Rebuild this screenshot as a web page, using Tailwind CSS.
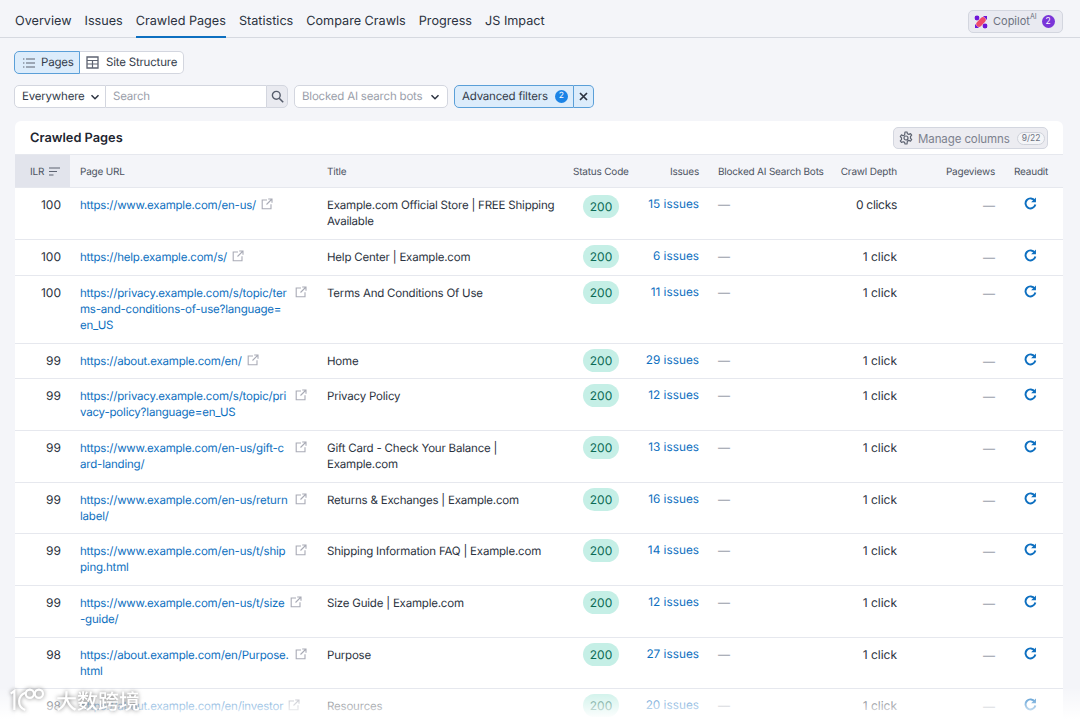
<!DOCTYPE html>
<html>
 <head>
  <title>Crawled Pages</title>
  <script src="https://cdn.jsdelivr.net/npm/@tailwindcss/browser@4"></script>
 </head>
 <body class="bg-[#f4f5f9] text-[#333b4a] font-['Inter',sans-serif] [text-rendering:geometricPrecision] whitespace-nowrap w-[1080px] h-[719px] overflow-hidden relative">
  <svg class="hidden">
   <symbol id="ext" viewBox="0 0 12 12"><path d="M6 2H1.200v8.800H10V6.200M7.200 1h3.800v3.800M11 1 5.500 6.500" fill="none" stroke="#a9abb6" stroke-width="1.100"/></symbol>
   <symbol id="redo" viewBox="0 0 12 12"><path d="M9.900 3.400A4.600 4.600 0 1 0 10.500 7" fill="none" stroke="#0d6fc0" stroke-width="1.800"/><path d="M11 .4v4.400H6.600z" fill="#0d6fc0"/></symbol>
  </svg>

  <!-- tabs -->
  <nav class="h-[38px] border-b border-[#d6d9e0] flex items-start pl-[15px] pr-[17px] gap-[13px] text-[12.650px] text-[#2b3240]">
   <a class="h-[38px] leading-[44px]">Overview</a>
   <a class="h-[38px] leading-[44px]">Issues</a>
   <a class="h-[38px] leading-[44px] border-b-2 border-[#0d6fc0]">Crawled Pages</a>
   <a class="h-[38px] leading-[44px]">Statistics</a>
   <a class="h-[38px] leading-[44px]">Compare Crawls</a>
   <a class="h-[38px] leading-[44px]">Progress</a>
   <a class="h-[38px] leading-[44px]">JS Impact</a>
   <button class="ml-auto mt-[10px] h-[23px] w-[95px] rounded-[5px] border border-[#d3d6df] bg-[#e9eaf1] flex items-center pl-[5px] text-[11px] text-[#6c7280]">
    <svg class="w-[14px] h-[14px] mr-[5px] shrink-0" viewBox="0 0 14 14"><path d="M1 5V1h4z M9 1h4v4z M1 9v4h4z M9 13h4V9z" fill="#6f16d8"/><circle cx="3" cy="3" r="2.400" fill="#6f16d8"/><circle cx="11" cy="11" r="2.400" fill="#6f16d8"/><rect x="1.500" y="4.200" width="11" height="5.600" rx="2.800" transform="rotate(-45 7 7)" fill="#ef4a6b"/></svg>
    Copilot<sup class="text-[7px] -mt-[2px]">AI</sup>
    <span class="ml-[5px] w-[13px] h-[13px] rounded-full bg-[#7a35d8] text-white text-[8.500px] leading-[13px]">2</span>
   </button>
  </nav>

  <!-- view switch -->
  <div class="flex ml-[14px] mt-[13px] h-[23px] text-[11.500px] tracking-[-0.2px]">
   <div class="w-[66px] flex items-center gap-[5px] pl-[7px] rounded-l-[5px] border border-[#5a9fd8] bg-[#dcecfb]">
    <svg class="w-[14px] h-[14px]" viewBox="0 0 14 14"><path d="M4 3h9M4 7h9M4 11h9" stroke="#5d6371" stroke-width="1.100"/><path d="M1 3h1.400M1 7h1.400M1 11h1.400" stroke="#5d6371" stroke-width="1.200"/></svg>
    Pages
   </div>
   <div class="w-[104px] flex items-center gap-[7px] pl-[6px] rounded-r-[5px] border border-l-0 border-[#d3d6df] bg-white">
    <svg class="w-[13px] h-[13px]" viewBox="0 0 13 13"><path d="M1 1h11v11H1z" fill="none" stroke="#5d6371" stroke-width="1.300"/><path d="M1 4.500h11M1 8h11M6.500 4.500V12" stroke="#5d6371" stroke-width="1.200"/></svg>
    Site Structure
   </div>
  </div>

  <!-- filters -->
  <div class="flex ml-[14px] mt-[11px] h-[23px] text-[11.500px] tracking-[-0.2px]">
   <div class="w-[92px] flex items-center justify-between pl-[7px] pr-[5px] rounded-l-[5px] border border-[#d3d6df] bg-white">
    Everywhere
    <svg class="w-[10px] h-[10px]" viewBox="0 0 10 10"><path d="m1.500 3.200 3.500 3.500 3.500-3.500" fill="none" stroke="#2b3240" stroke-width="1.500"/></svg>
   </div>
   <div class="w-[160px] flex items-center pl-[7px] border-y border-[#d3d6df] bg-white text-[#9a9eaa]">Search</div>
   <div class="w-[22px] flex items-center justify-center rounded-r-[5px] border border-[#d3d6df] bg-[#e9eaf0]">
    <svg class="w-[13px] h-[13px]" viewBox="0 0 13 13"><circle cx="5.300" cy="5.300" r="3.900" fill="none" stroke="#555c6b" stroke-width="1.400"/><path d="m8.200 8.200 4 4" stroke="#555c6b" stroke-width="1.600"/></svg>
   </div>
   <div class="ml-[6px] w-[154px] flex items-center justify-between pl-[7px] pr-[7px] rounded-[5px] border border-[#d3d6df] bg-white text-[#9a9eaa]">
    Blocked AI search bots
    <svg class="w-[10px] h-[10px]" viewBox="0 0 10 10"><path d="m1.500 3.200 3.500 3.500 3.500-3.500" fill="none" stroke="#2b3240" stroke-width="1.500"/></svg>
   </div>
   <div class="ml-[6px] w-[120px] flex items-center pl-[7px] rounded-l-[5px] border border-[#5a9fd8] bg-[#dcecfb]">
    Advanced filters
    <span class="ml-[7px] w-[13px] h-[13px] rounded-full bg-[#1a83e6] text-white text-[8.500px] leading-[13px] text-center">2</span>
   </div>
   <div class="w-[20px] flex items-center justify-center rounded-r-[5px] border border-l-0 border-[#5a9fd8] bg-[#dcecfb]">
    <svg class="w-[9px] h-[9px]" viewBox="0 0 9 9"><path d="m1 1 7 7M8 1 1 8" stroke="#2b3240" stroke-width="1.700"/></svg>
   </div>
  </div>

  <!-- card -->
  <section class="ml-[15px] mt-[13px] w-[1048px] bg-white rounded-t-[6px]">
   <header class="h-[34px] flex items-center justify-between pl-[15px] pr-[15px] border-b border-[#e6e8ee]">
    <h2 class="text-[12.800px] font-semibold text-[#1e2530] pt-[3px]">Crawled Pages</h2>
    <button class="h-[22px] w-[155px] mt-[1px] rounded-[5px] border border-[#d3d6df] bg-[#ececf1] flex items-center pl-[5px] text-[11.500px] leading-[22px] tracking-[-0.1px] text-[#7c818e]">
     <svg class="w-[14px] h-[14px] mr-[5px] shrink-0" viewBox="0 0 14 14"><circle cx="7" cy="7" r="2" fill="none" stroke="#5d6371" stroke-width="1.200"/><path d="M6 1h2l.4 1.700 1.500.7 1.600-.8 1.200 1.600-1.200 1.300v1.800l1.200 1.200-1.200 1.700-1.600-.8-1.500.7L8 13H6l-.4-1.600-1.500-.7-1.600.8-1.200-1.700 1.200-1.200V6.800L1.300 5.500 2.500 3.900l1.600.8 1.500-.7z" fill="none" stroke="#5d6371" stroke-width="1.200" stroke-linejoin="round"/></svg>
     <span class="pt-[1px]">Manage columns</span>
     <span class="ml-[7px] px-[4px] h-[13px] rounded-full border border-[#cfd2da] bg-[#f4f5f8] text-[8.500px] leading-[11px] tracking-normal text-[#6c7280]">9/22</span>
    </button>
   </header>

   <table class="w-[1048px] table-fixed border-collapse text-[12px] leading-[16px] text-[#2b3240]">
    <colgroup>
     <col class="w-[55px]"><col class="w-[247px]"><col class="w-[247px]"><col class="w-[70px]"><col class="w-[74px]"><col class="w-[124px]"><col class="w-[75px]"><col class="w-[97px]"><col class="w-[59px]">
    </colgroup>
    <thead>
     <tr class="h-[32px] bg-[#f4f5f9] text-[10px] tracking-[-0.2px] text-[#4d5462] border-b border-[#e6e8ee] [&>th]:pt-[2px]">
      <th class="font-normal bg-[#e2e4ec] pl-[15px] text-left"><span class="flex items-center gap-[5px]">ILR <svg class="w-[11px] h-[9px]" viewBox="0 0 11 9"><path d="M0 1h11M0 4.500h8M0 8h4.500" stroke="#5d6371" stroke-width="1.100"/></svg></span></th>
      <th class="font-normal pl-[10px] text-left">Page URL</th>
      <th class="font-normal pl-[10px] text-left">Title</th>
      <th class="font-normal text-left pl-[9px]">Status Code</th>
      <th class="font-normal text-right pr-[9px]">Issues</th>
      <th class="font-normal text-left pl-[10px]">Blocked AI Search Bots</th>
      <th class="font-normal text-right pr-[10px]">Crawl Depth</th>
      <th class="font-normal text-right pr-[9px]">Pageviews</th>
      <th class="font-normal text-left pl-[10px]">Reaudit</th>
     </tr>
    </thead>
    <tbody class="[&>tr]:border-b [&>tr]:border-[#e6e8ee] [&_td]:align-top">
     <tr>
      <td class="pt-[9px] pb-[10px] pr-[9px] text-right">100</td>
      <td class="pt-[9px] pb-[10px] pl-[10px] text-[11.500px] tracking-[-0.2px]"><div class="flex items-start gap-[5px] w-[227px]"><a class="min-w-0 whitespace-normal break-all text-[#0d6fc0]">https://www.example.com/en-us/</a><svg class="w-[12px] h-[12px] mt-[1px] shrink-0"><use href="#ext"/></svg></div></td>
      <td class="pt-[9px] pb-[10px] pl-[10px] pr-[8px] whitespace-normal text-[11.500px] tracking-[-0.2px]">Example.com Official Store | FREE Shipping Available</td>
      <td class="pt-[7px] pl-[19px]"><span class="block w-[36px] h-[23px] rounded-full bg-[#c5efe6] text-[#0c6b55] text-center leading-[23px]">200</span></td>
      <td class="pt-[8px] pr-[9px] text-right text-[11.800px] text-[#0d6fc0]">15 issues</td>
      <td class="pt-[9px] pl-[10px] text-[#9a9eaa]">—</td>
      <td class="pt-[9px] pr-[10px] text-right tracking-[-0.3px]">0 clicks</td>
      <td class="pt-[10px] pr-[9px] text-right text-[#9a9eaa]">—</td>
      <td class="pt-[9px] pl-[20px]"><svg class="w-[13px] h-[13px]"><use href="#redo"/></svg></td>
     </tr>
     <tr>
      <td class="pt-[9px] pb-[10px] pr-[9px] text-right">100</td>
      <td class="pt-[9px] pb-[10px] pl-[10px] text-[11.500px] tracking-[-0.2px]"><div class="flex items-start gap-[5px] w-[227px]"><a class="min-w-0 whitespace-normal break-all text-[#0d6fc0]">https://help.example.com/s/</a><svg class="w-[12px] h-[12px] mt-[1px] shrink-0"><use href="#ext"/></svg></div></td>
      <td class="pt-[9px] pb-[10px] pl-[10px] pr-[8px] whitespace-normal text-[11.500px] tracking-[-0.2px]">Help Center | Example.com</td>
      <td class="pt-[5px] pl-[19px]"><span class="block w-[36px] h-[23px] rounded-full bg-[#c5efe6] text-[#0c6b55] text-center leading-[23px]">200</span></td>
      <td class="pt-[8px] pr-[9px] text-right text-[11.800px] text-[#0d6fc0]">6 issues</td>
      <td class="pt-[9px] pl-[10px] text-[#9a9eaa]">—</td>
      <td class="pt-[9px] pr-[10px] text-right">1 click</td>
      <td class="pt-[10px] pr-[9px] text-right text-[#9a9eaa]">—</td>
      <td class="pt-[9px] pl-[20px]"><svg class="w-[13px] h-[13px]"><use href="#redo"/></svg></td>
     </tr>
     <tr>
      <td class="pt-[9px] pb-[10px] pr-[9px] text-right">100</td>
      <td class="pt-[9px] pb-[10px] pl-[10px] text-[11.500px] tracking-[-0.2px]"><div class="flex items-start gap-[5px] w-[227px]"><a class="min-w-0 whitespace-normal break-all text-[#0d6fc0]">https://privacy.example.com/s/topic/terms-and-conditions-of-use?language=<br>en_US</a><svg class="w-[12px] h-[12px] mt-[1px] shrink-0"><use href="#ext"/></svg></div></td>
      <td class="pt-[9px] pb-[10px] pl-[10px] pr-[8px] whitespace-normal text-[11.500px] tracking-[-0.2px]">Terms And Conditions Of Use</td>
      <td class="pt-[5px] pl-[19px]"><span class="block w-[36px] h-[23px] rounded-full bg-[#c5efe6] text-[#0c6b55] text-center leading-[23px]">200</span></td>
      <td class="pt-[8px] pr-[9px] text-right text-[11.800px] text-[#0d6fc0]">11 issues</td>
      <td class="pt-[9px] pl-[10px] text-[#9a9eaa]">—</td>
      <td class="pt-[9px] pr-[10px] text-right">1 click</td>
      <td class="pt-[10px] pr-[9px] text-right text-[#9a9eaa]">—</td>
      <td class="pt-[9px] pl-[20px]"><svg class="w-[13px] h-[13px]"><use href="#redo"/></svg></td>
     </tr>
     <tr>
      <td class="pt-[9px] pb-[9px] pr-[9px] text-right">99</td>
      <td class="pt-[9px] pb-[9px] pl-[10px] text-[11.500px] tracking-[-0.2px]"><div class="flex items-start gap-[5px] w-[227px]"><a class="min-w-0 whitespace-normal break-all text-[#0d6fc0]">https://about.example.com/en/</a><svg class="w-[12px] h-[12px] mt-[1px] shrink-0"><use href="#ext"/></svg></div></td>
      <td class="pt-[9px] pb-[9px] pl-[10px] pr-[8px] whitespace-normal text-[11.500px] tracking-[-0.2px]">Home</td>
      <td class="pt-[5px] pl-[19px]"><span class="block w-[36px] h-[23px] rounded-full bg-[#c5efe6] text-[#0c6b55] text-center leading-[23px]">200</span></td>
      <td class="pt-[8px] pr-[9px] text-right text-[11.800px] text-[#0d6fc0]">29 issues</td>
      <td class="pt-[9px] pl-[10px] text-[#9a9eaa]">—</td>
      <td class="pt-[9px] pr-[10px] text-right">1 click</td>
      <td class="pt-[10px] pr-[9px] text-right text-[#9a9eaa]">—</td>
      <td class="pt-[9px] pl-[20px]"><svg class="w-[13px] h-[13px]"><use href="#redo"/></svg></td>
     </tr>
     <tr>
      <td class="pt-[9px] pb-[10px] pr-[9px] text-right">99</td>
      <td class="pt-[9px] pb-[10px] pl-[10px] text-[11.500px] tracking-[-0.2px]"><div class="flex items-start gap-[5px] w-[227px]"><a class="min-w-0 whitespace-normal break-all text-[#0d6fc0]">https://privacy.example.com/s/topic/privacy-policy?language=en_US</a><svg class="w-[12px] h-[12px] mt-[1px] shrink-0"><use href="#ext"/></svg></div></td>
      <td class="pt-[9px] pb-[10px] pl-[10px] pr-[8px] whitespace-normal text-[11.500px] tracking-[-0.2px]">Privacy Policy</td>
      <td class="pt-[5px] pl-[19px]"><span class="block w-[36px] h-[23px] rounded-full bg-[#c5efe6] text-[#0c6b55] text-center leading-[23px]">200</span></td>
      <td class="pt-[8px] pr-[9px] text-right text-[11.800px] text-[#0d6fc0]">12 issues</td>
      <td class="pt-[9px] pl-[10px] text-[#9a9eaa]">—</td>
      <td class="pt-[9px] pr-[10px] text-right">1 click</td>
      <td class="pt-[10px] pr-[9px] text-right text-[#9a9eaa]">—</td>
      <td class="pt-[9px] pl-[20px]"><svg class="w-[13px] h-[13px]"><use href="#redo"/></svg></td>
     </tr>
     <tr>
      <td class="pt-[9px] pb-[10px] pr-[9px] text-right">99</td>
      <td class="pt-[9px] pb-[10px] pl-[10px] text-[11.500px] tracking-[-0.2px]"><div class="flex items-start gap-[5px] w-[227px]"><a class="min-w-0 whitespace-normal break-all text-[#0d6fc0]">https://www.example.com/en-us/gift-card-landing/</a><svg class="w-[12px] h-[12px] mt-[1px] shrink-0"><use href="#ext"/></svg></div></td>
      <td class="pt-[9px] pb-[10px] pl-[10px] pr-[40px] whitespace-normal text-[11.500px] tracking-[-0.2px]">Gift Card - Check Your Balance | Example.com</td>
      <td class="pt-[5px] pl-[19px]"><span class="block w-[36px] h-[23px] rounded-full bg-[#c5efe6] text-[#0c6b55] text-center leading-[23px]">200</span></td>
      <td class="pt-[8px] pr-[9px] text-right text-[11.800px] text-[#0d6fc0]">13 issues</td>
      <td class="pt-[9px] pl-[10px] text-[#9a9eaa]">—</td>
      <td class="pt-[9px] pr-[10px] text-right">1 click</td>
      <td class="pt-[10px] pr-[9px] text-right text-[#9a9eaa]">—</td>
      <td class="pt-[9px] pl-[20px]"><svg class="w-[13px] h-[13px]"><use href="#redo"/></svg></td>
     </tr>
     <tr>
      <td class="pt-[9px] pb-[9px] pr-[9px] text-right">99</td>
      <td class="pt-[9px] pb-[9px] pl-[10px] text-[11.500px] tracking-[-0.2px]"><div class="flex items-start gap-[5px] w-[227px]"><a class="min-w-0 whitespace-normal break-all text-[#0d6fc0]">https://www.example.com/en-us/returnlabel/</a><svg class="w-[12px] h-[12px] mt-[1px] shrink-0"><use href="#ext"/></svg></div></td>
      <td class="pt-[9px] pb-[9px] pl-[10px] pr-[8px] whitespace-normal text-[11.500px] tracking-[-0.2px]">Returns &amp; Exchanges | Example.com</td>
      <td class="pt-[5px] pl-[19px]"><span class="block w-[36px] h-[23px] rounded-full bg-[#c5efe6] text-[#0c6b55] text-center leading-[23px]">200</span></td>
      <td class="pt-[8px] pr-[9px] text-right text-[11.800px] text-[#0d6fc0]">16 issues</td>
      <td class="pt-[9px] pl-[10px] text-[#9a9eaa]">—</td>
      <td class="pt-[9px] pr-[10px] text-right">1 click</td>
      <td class="pt-[10px] pr-[9px] text-right text-[#9a9eaa]">—</td>
      <td class="pt-[9px] pl-[20px]"><svg class="w-[13px] h-[13px]"><use href="#redo"/></svg></td>
     </tr>
     <tr>
      <td class="pt-[9px] pb-[10px] pr-[9px] text-right">99</td>
      <td class="pt-[9px] pb-[10px] pl-[10px] text-[11.500px] tracking-[-0.2px]"><div class="flex items-start gap-[5px] w-[227px]"><a class="min-w-0 whitespace-normal break-all text-[#0d6fc0]">https://www.example.com/en-us/t/shipping.html</a><svg class="w-[12px] h-[12px] mt-[1px] shrink-0"><use href="#ext"/></svg></div></td>
      <td class="pt-[9px] pb-[10px] pl-[10px] pr-[8px] whitespace-normal text-[11.500px] tracking-[-0.2px]">Shipping Information FAQ | Example.com</td>
      <td class="pt-[5px] pl-[19px]"><span class="block w-[36px] h-[23px] rounded-full bg-[#c5efe6] text-[#0c6b55] text-center leading-[23px]">200</span></td>
      <td class="pt-[8px] pr-[9px] text-right text-[11.800px] text-[#0d6fc0]">14 issues</td>
      <td class="pt-[9px] pl-[10px] text-[#9a9eaa]">—</td>
      <td class="pt-[9px] pr-[10px] text-right">1 click</td>
      <td class="pt-[10px] pr-[9px] text-right text-[#9a9eaa]">—</td>
      <td class="pt-[9px] pl-[20px]"><svg class="w-[13px] h-[13px]"><use href="#redo"/></svg></td>
     </tr>
     <tr>
      <td class="pt-[9px] pb-[10px] pr-[9px] text-right">99</td>
      <td class="pt-[9px] pb-[10px] pl-[10px] text-[11.500px] tracking-[-0.2px]"><div class="flex items-start gap-[5px] w-[227px]"><a class="min-w-0 whitespace-normal break-all text-[#0d6fc0]">https://www.example.com/en-us/t/size<br>-guide/</a><svg class="w-[12px] h-[12px] mt-[1px] shrink-0"><use href="#ext"/></svg></div></td>
      <td class="pt-[9px] pb-[10px] pl-[10px] pr-[8px] whitespace-normal text-[11.500px] tracking-[-0.2px]">Size Guide | Example.com</td>
      <td class="pt-[5px] pl-[19px]"><span class="block w-[36px] h-[23px] rounded-full bg-[#c5efe6] text-[#0c6b55] text-center leading-[23px]">200</span></td>
      <td class="pt-[8px] pr-[9px] text-right text-[11.800px] text-[#0d6fc0]">12 issues</td>
      <td class="pt-[9px] pl-[10px] text-[#9a9eaa]">—</td>
      <td class="pt-[9px] pr-[10px] text-right">1 click</td>
      <td class="pt-[10px] pr-[9px] text-right text-[#9a9eaa]">—</td>
      <td class="pt-[9px] pl-[20px]"><svg class="w-[13px] h-[13px]"><use href="#redo"/></svg></td>
     </tr>
     <tr>
      <td class="pt-[9px] pb-[9px] pr-[9px] text-right">98</td>
      <td class="pt-[9px] pb-[9px] pl-[10px] text-[11.500px] tracking-[-0.2px]"><div class="flex items-start gap-[5px] w-[227px]"><a class="min-w-0 whitespace-normal break-all text-[#0d6fc0]">https://about.example.com/en/Purpose.html</a><svg class="w-[12px] h-[12px] mt-[1px] shrink-0"><use href="#ext"/></svg></div></td>
      <td class="pt-[9px] pb-[9px] pl-[10px] pr-[8px] whitespace-normal text-[11.500px] tracking-[-0.2px]">Purpose</td>
      <td class="pt-[5px] pl-[19px]"><span class="block w-[36px] h-[23px] rounded-full bg-[#c5efe6] text-[#0c6b55] text-center leading-[23px]">200</span></td>
      <td class="pt-[8px] pr-[9px] text-right text-[11.800px] text-[#0d6fc0]">27 issues</td>
      <td class="pt-[9px] pl-[10px] text-[#9a9eaa]">—</td>
      <td class="pt-[9px] pr-[10px] text-right">1 click</td>
      <td class="pt-[10px] pr-[9px] text-right text-[#9a9eaa]">—</td>
      <td class="pt-[9px] pl-[20px]"><svg class="w-[13px] h-[13px]"><use href="#redo"/></svg></td>
     </tr>
     <tr>
      <td class="pt-[9px] pb-[10px] pr-[9px] text-right">98</td>
      <td class="pt-[9px] pb-[10px] pl-[10px] text-[11.500px] tracking-[-0.2px]"><div class="flex items-start gap-[5px] w-[227px]"><a class="min-w-0 whitespace-normal break-all text-[#0d6fc0]">https://about.example.com/en/investor</a><svg class="w-[12px] h-[12px] mt-[1px] shrink-0"><use href="#ext"/></svg></div></td>
      <td class="pt-[9px] pb-[10px] pl-[10px] pr-[8px] whitespace-normal text-[11.500px] tracking-[-0.2px]">Resources</td>
      <td class="pt-[5px] pl-[19px]"><span class="block w-[36px] h-[23px] rounded-full bg-[#c5efe6] text-[#0c6b55] text-center leading-[23px]">200</span></td>
      <td class="pt-[8px] pr-[9px] text-right text-[11.800px] text-[#0d6fc0]">20 issues</td>
      <td class="pt-[9px] pl-[10px] text-[#9a9eaa]">—</td>
      <td class="pt-[9px] pr-[10px] text-right">1 click</td>
      <td class="pt-[10px] pr-[9px] text-right text-[#9a9eaa]">—</td>
      <td class="pt-[9px] pl-[20px]"><svg class="w-[13px] h-[13px]"><use href="#redo"/></svg></td>
     </tr>
    </tbody>
   </table>
  </section>

  <!-- bottom fade and watermark -->
  <div class="absolute left-0 right-0 bottom-0 h-[30px] bg-gradient-to-b from-white/10 to-white"></div>
  <div class="absolute left-[8px] bottom-[5px] flex items-center gap-[8px] text-white [filter:drop-shadow(0_0_2px_rgba(70,70,70,.7))]">
   <svg class="w-[40px] h-[26px]" viewBox="0 0 44 28" fill="none" stroke="white" stroke-width="2.400"><path d="M3 6 7 3v21"/><path d="M19 5C11 8 9 20 19 24"/><circle cx="24" cy="6" r="4.500"/><circle cx="34" cy="6" r="4.500"/></svg>
   <span class="font-['Noto_Sans_CJK_SC',sans-serif] text-[21px] leading-[24px] font-medium">大数跨境</span>
  </div>
 </body>
</html>
